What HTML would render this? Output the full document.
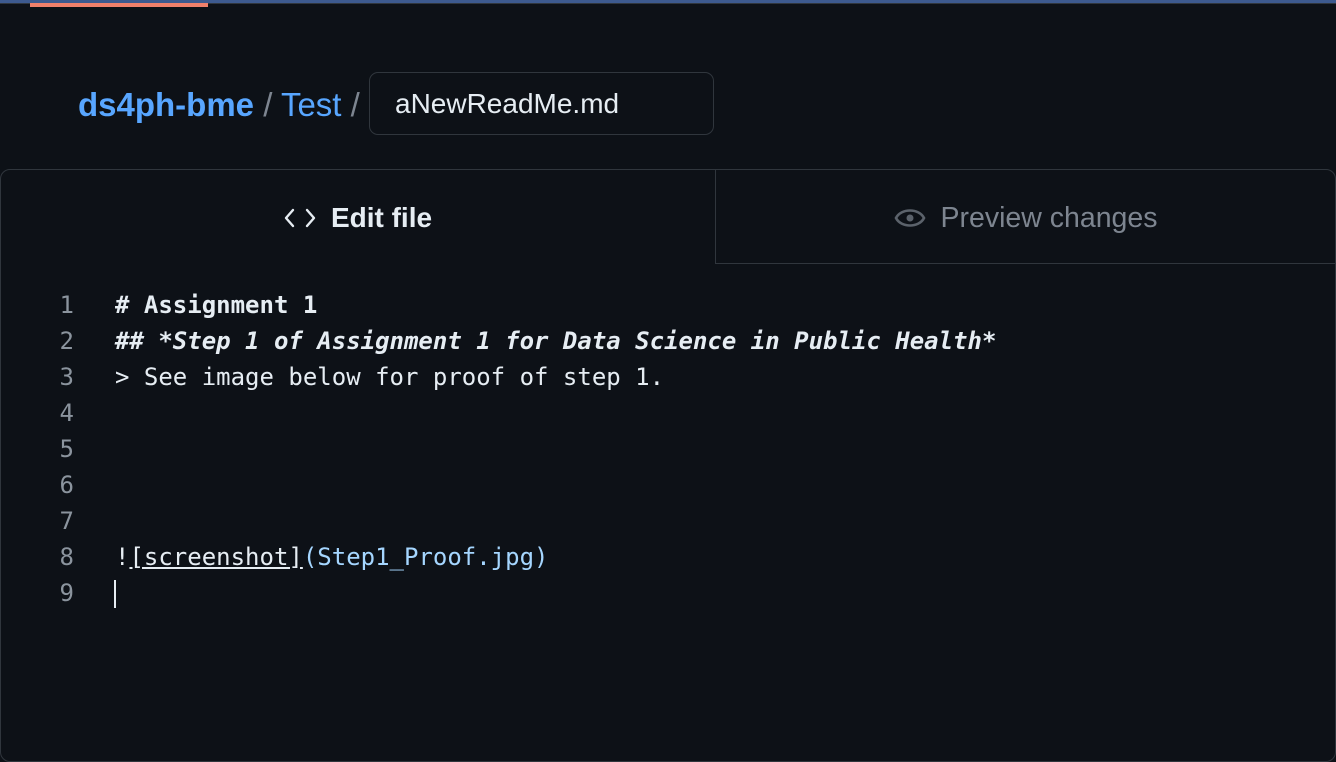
<!DOCTYPE html>
<html><head><meta charset="utf-8"><style>
*{margin:0;padding:0;box-sizing:border-box}
html,body{width:1336px;height:762px;overflow:hidden;background:#0d1117;font-family:"Liberation Sans",sans-serif}
.topline{position:absolute;left:0;top:0;width:1336px;height:3px;background:#3d5a8f}
.topline2{position:absolute;left:0;top:3px;width:1336px;height:1px;background:#30363d}
.orange{position:absolute;left:30px;top:3px;width:178px;height:4px;background:#f0806b}
.crumb{position:absolute;left:78px;top:87px;font-size:33px;line-height:36px;color:#7d8590;white-space:nowrap}
.crumb b{color:#58a6ff}
.crumb .t{color:#58a6ff}
.inp{position:absolute;left:369px;top:72px;width:345px;height:63px;border:1.5px solid #30363d;border-radius:9px;color:#e6edf3;font-size:28px;padding-left:25px;line-height:62px}
.box{position:absolute;left:0;top:169px;width:1336px;height:593px;border:1.5px solid #30363d;border-radius:10px}
.tab1{position:absolute;left:0;top:170px;width:715px;height:95px;color:#e6edf3;font-size:28px;font-weight:bold;display:flex;align-items:center;justify-content:center;gap:14px}
.tab2{position:absolute;left:715px;top:169px;width:621px;height:95px;border-left:1.5px solid #30363d;border-bottom:1.5px solid #30363d;color:#7d8590;font-size:28.5px;display:flex;align-items:center;justify-content:center;gap:14px;padding-top:4px}
.code{position:absolute;left:0;top:287px;font-family:"DejaVu Sans Mono","Liberation Mono",monospace;font-size:24px;line-height:36px;color:#e6edf3}
.ln{position:absolute;left:0;width:74px;text-align:right;color:#8b949e;font-family:"DejaVu Sans Mono",monospace}
.tx{position:absolute;left:115px;white-space:pre}
.cur{position:absolute;left:114px;top:580px;width:2px;height:28px;background:#e6edf3}
</style></head><body>
<div class="topline"></div><div class="topline2"></div><div class="orange"></div>
<div class="crumb"><b>ds4ph-bme</b> / <span class="t">Test</span> /</div>
<div class="inp">aNewReadMe.md</div>
<div class="box"></div>
<div class="tab1"><svg width="34" height="24" viewBox="0 0 34 24"><path d="M10 4 L3 12 L10 20 M24 4 L31 12 L24 20" fill="none" stroke="#e6edf3" stroke-width="2.4" stroke-linecap="round" stroke-linejoin="round"/></svg><span>Edit file</span></div>
<div class="tab2"><svg width="32" height="26" viewBox="0 0 32 26"><path d="M2 13 C7 3 25 3 30 13 C25 23 7 23 2 13Z" fill="none" stroke="#5b626b" stroke-width="2.6"/><circle cx="16" cy="13" r="3.5" fill="#5b626b"/></svg><span>Preview changes</span></div>
<div class="code">
<div class="ln" style="top:0">1</div><div class="tx" style="top:0;font-weight:bold"># Assignment 1</div>
<div class="ln" style="top:36px">2</div><div class="tx" style="top:36px;font-weight:bold;font-style:italic">## *Step 1 of Assignment 1 for Data Science in Public Health*</div>
<div class="ln" style="top:72px">3</div><div class="tx" style="top:72px">&gt; See image below for proof of step 1.</div>
<div class="ln" style="top:108px">4</div>
<div class="ln" style="top:144px">5</div>
<div class="ln" style="top:180px">6</div>
<div class="ln" style="top:216px">7</div>
<div class="ln" style="top:252px">8</div><div class="tx" style="top:252px">!<u>[screenshot]</u><span style="color:#a5d6ff">(Step1_Proof.jpg)</span></div>
<div class="ln" style="top:288px">9</div>
</div>
<div class="cur"></div>
</body></html>
